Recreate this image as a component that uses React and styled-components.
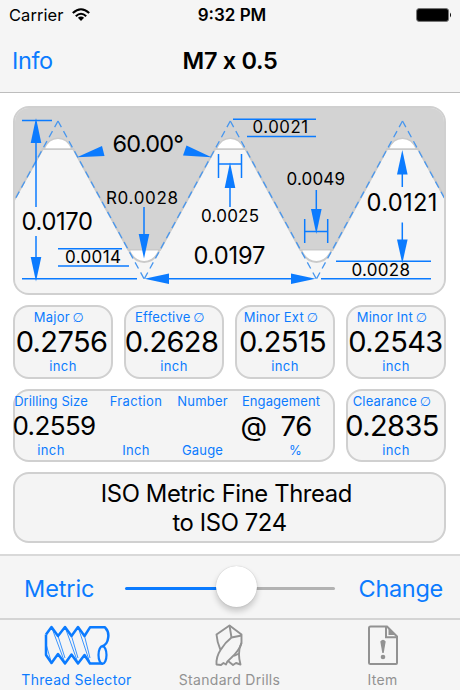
import React, { useState } from "react";
import styled, { createGlobalStyle } from "styled-components";

const blue = "#0b7bff";

const GlobalStyle = createGlobalStyle`
  * { box-sizing: border-box; }
  body {
    margin: 0;
    background: #fff;
    font-family: Inter, "Liberation Sans", sans-serif;
    overflow: hidden;
  }
`;

const Screen = styled.div`
  width: 460px;
  height: 690px;
  display: flex;
  flex-direction: column;
  color: #000;
`;

const Header = styled.header`
  height: 93px;
  flex: none;
  background: #f5f5f5;
  border-bottom: 1px solid #bdbdbd;
`;

const StatusBar = styled.div`
  height: 30px;
  display: grid;
  grid-template-columns: 1fr auto 1fr;
  align-items: center;
  padding: 0 8px 0 9px;
`;

const Carrier = styled.div`
  display: flex;
  align-items: center;
  gap: 9px;
  font-size: 16.5px;
  letter-spacing: 0.05px;
`;

const Clock = styled.div`
  margin-left: 3px;
  font-size: 17px;
  font-weight: 600;
`;

const Battery = styled.svg`
  justify-self: end;
`;

const NavBar = styled.div`
  height: 61px;
  display: grid;
  grid-template-columns: 1fr auto 1fr;
  align-items: center;
  padding: 0 12px;
`;

const LinkButton = styled.button`
  border: 0;
  padding: 0;
  background: none;
  color: ${blue};
  font: 400 23.5px Inter, sans-serif;
  letter-spacing: ${props => props.$spacing || "0"};
  text-align: left;
  white-space: nowrap;
`;

const Title = styled.h1`
  margin: 0;
  font-size: 23.5px;
  font-weight: 600;
  letter-spacing: -0.3px;
`;

const Content = styled.main`
  flex: 1;
  padding: 13px 14px 0 13px;
  display: flex;
  flex-direction: column;
  gap: 10px;
`;

const Card = styled.section`
  background: #f4f4f4;
  border: 2px solid #d0d0d0;
  border-radius: 16px;
`;

const DiagramCard = styled(Card)`
  height: 189px;
  overflow: hidden;
  svg { display: block; }
`;

const CardGrid = styled.div`
  display: grid;
  grid-template-columns: repeat(4, 100px);
  gap: 10px 11px;
`;

const StatCard = styled(Card)`
  height: 73.5px;
  display: flex;
  flex-direction: column;
  align-items: center;
`;

const DrillCard = styled(Card)`
  grid-column: span 3;
  height: 73.5px;
  display: grid;
  grid-template-columns: 72px 98px 35px 122px;
`;

const DrillColumn = styled.div`
  display: flex;
  flex-direction: column;
  align-items: center;
  white-space: nowrap;
`;

const Label = styled.div`
  height: 20px;
  line-height: 20px;
  margin-left: ${props => props.$shift || 0}px;
  color: ${blue};
  font-size: 13px;
  letter-spacing: ${props => props.$spacing || "0.35px"};
  white-space: nowrap;
`;

const Unit = styled(Label)`
  height: 18px;
  line-height: 18px;
`;

const Diameter = styled.span`
  margin-left: -1px;
  font-family: "DejaVu Sans", sans-serif;
  font-size: 13px;
  line-height: 1;
`;

const Value = styled.div`
  height: 30px;
  line-height: 30px;
  margin-left: ${props => props.$shift || 0}px;
  font-size: ${props => props.$size || "29px"};
  letter-spacing: -0.6px;
  white-space: pre;
`;

const StandardCard = styled(Card)`
  height: 71px;
  display: flex;
  align-items: center;
  justify-content: center;
  text-align: center;
  font-size: 23.8px;
  line-height: 29px;
  letter-spacing: -0.38px;
`;

const Toolbar = styled.div`
  height: 64px;
  flex: none;
  display: flex;
  align-items: center;
  justify-content: space-between;
  padding: 2px 17px 0 24px;
  background: #f5f5f5;
  border-top: 2px solid #d9d9d9;
`;

const Track = styled.div`
  width: 210px;
  height: 3px;
  margin-left: 8px;
  border-radius: 2px;
  background: linear-gradient(to right, ${blue} 53%, #b2b2b2 53%);
  display: flex;
  align-items: center;
`;

const Knob = styled.div`
  width: 41px;
  height: 41px;
  flex: none;
  margin: -3px 0 0 91px;
  border-radius: 50%;
  background: #fff;
  box-shadow: 0 4px 6px rgba(0, 0, 0, 0.2), 0 0 1px rgba(0, 0, 0, 0.25);
`;

const TabBar = styled.nav`
  height: 72px;
  flex: none;
  display: grid;
  grid-template-columns: repeat(3, 153px);
  background: #f5f5f5;
  border-top: 2px solid #d4d4d4;
`;

const Tab = styled.button`
  border: 0;
  padding: 4px 0 0;
  background: none;
  display: flex;
  flex-direction: column;
  align-items: center;
  color: ${props => (props.$active ? blue : "#929292")};
  font: 400 14px/18px Inter, sans-serif;
  letter-spacing: 0.3px;
  white-space: nowrap;
  svg { margin-bottom: 5px; flex: none; }
`;

const peaks = [58, 230.3, 402.5];
const roots = [144.2, 316.4];

const stats = [
  { label: "Major", value: "0.2756", shift: -3 },
  { label: "Effective", value: "0.2628", shift: -5 },
  { label: "Minor Ext", value: "0.2515", shift: -5 },
  { label: "Minor Int", value: "0.2543", shift: -1 }
];

// x, baseline, width, font size
const dimensions = [
  ["60.00°", 112.5, 152.3, 71.5, 23.5],
  ["0.0170", 21.5, 229.7, 71.5, 23.7],
  ["0.0197", 193.5, 264.2, 72, 23.7],
  ["0.0121", 366.5, 211, 71, 23.7],
  ["R0.0028", 106, 203.8, 72, 17],
  ["0.0014", 65, 262.7, 56, 17],
  ["0.0025", 201, 222.4, 58, 17],
  ["0.0021", 252.5, 133.4, 55.5, 16.8],
  ["0.0049", 286.5, 185, 58.5, 17],
  ["0.0028", 351.5, 275.7, 58.5, 17]
];

const ThreadDiagram = () => (
  <svg width="429" height="185" viewBox="15 108 429 185">
    <path d="M15 108H444V293H15Z" fill="#d3d3d3" />
    <path
      d="M13 202 42.7 149H73.3L128.5 250H160L215 149H245.5L300.5 250H332.5L387 149H418L446 200V295H13Z"
      fill="#f5f5f5"
      stroke="#cacaca"
      strokeWidth="2"
    />
    {peaks.map(x => (
      <path
        key={x}
        d={`M${x - 14} 149C${x - 8} 134.500 ${x + 8} 134.500 ${x + 14} 149Z`}
        fill="#fff"
        stroke="#cacaca"
        strokeWidth="1.5"
      />
    ))}
    {roots.map(x => (
      <g key={x}>
        <path d={`M${x - 14} 250.500C${x - 8} 265 ${x + 8} 265 ${x + 14} 250.500Z`} fill="#fff" />
        <path
          d={`M${x - 15} 251C${x - 8} 265.500 ${x + 8} 265.500 ${x + 15} 251`}
          fill="none"
          stroke="#cacaca"
          strokeWidth="2"
        />
      </g>
    ))}
    <g fill="none" stroke="#4796ee" strokeWidth="1.3" strokeDasharray="7 4.500">
      <path d="M58 121 13 203" />
      <path d="M58 121 144.200 279" />
      <path d="M230.300 121 144.200 279" />
      <path d="M230.300 121 316.400 279" />
      <path d="M402.500 121 316.400 279" />
      <path d="M402.500 121 446 201" />
    </g>
    <g fill="none" stroke={blue} strokeWidth="1.5">
      <path d="M22 120.500H52M22 278.700H137M36 122V207M36 236V277" />
      <path d="M58 248.700H122M58 266H129M144 207V236" />
      <path d="M233 119.300H316M247 136.500H316" />
      <path d="M218.500 154V178M241.500 154V178M218.500 164H241.500M230 186V207" />
      <path d="M304.700 219V243M327.700 219V243M304.700 231.500H327.700M316.300 190V211" />
      <path d="M402.300 172V187M402.300 222.500V242" />
      <path d="M336 261.300H431M321 278.700H431M165 278.700H295" />
    </g>
    <g fill={blue}>
      <path d="M36 118 41.300 143H30.700Z" />
      <path d="M36 281.500 41.300 257H30.700Z" />
      <path d="M144 258.500 149.300 234H138.700Z" />
      <path d="M77 157.300 102 146 104.500 156Z" />
      <path d="M211.500 157.300 186.500 145.500 183 155.500Z" />
      <path d="M230 162.500 235.300 188H224.700Z" />
      <path d="M316.300 234 321.600 209H311Z" />
      <path d="M402.300 150 407.600 174.500H397Z" />
      <path d="M402.300 263.500 407.600 239.500H397Z" />
      <path d="M144.500 278.700 169 273.400V284Z" />
      <path d="M315.500 278.700 291 273.400V284Z" />
    </g>
    <g fill="#000">
      {dimensions.map(([text, x, y, width, size]) => (
        <text key={text + x} x={x} y={y} fontSize={size} textLength={width}>
          {text}
        </text>
      ))}
    </g>
  </svg>
);

const WifiIcon = () => (
  <svg width="18" height="14" viewBox="0 0 18 14">
    <g fill="none" stroke="#000" strokeWidth="2.1">
      <path d="M.8 5.100Q9-2.600 17.200 5.100" />
      <path d="M3.800 8.200Q9 3.300 14.200 8.200" />
    </g>
    <path d="M5.900 9.800Q9 7.200 12.100 9.800L9 13Z" />
  </svg>
);

const ThreadIcon = () => (
  <svg width="66" height="42" viewBox="0 0 66 42">
    <g fill="none" stroke="currentColor" strokeLinejoin="round">
      <path
        d="M2 10.500 7.500 3 14 12 21 3 27.500 12 34 3 40.500 12 46 3.300H61Q65.500 8 64 14.500 63.500 20 58 22.500"
        strokeWidth="2.5"
      />
      <path d="M2 10.500V31L7.500 39 14 30 21 39.500 27.500 30.500 34 39.500 40.500 31 46 39.500H58.500" strokeWidth="2.5" />
      <ellipse cx="58.500" cy="31" rx="4" ry="8.800" strokeWidth="2.2" />
      <path
        d="M2 20 7.500 39M7.500 3 21 39M14 12 21 34M21 3 34 39M27.500 12 34 34M34 3 46 39M40.500 12 46 34"
        strokeWidth="0.8"
      />
    </g>
  </svg>
);

const DrillIcon = () => (
  <svg width="30" height="42" viewBox="0 0 30 42">
    <g fill="none" stroke="currentColor" strokeWidth="1.9" strokeLinejoin="round">
      <path d="M5.500 26Q2 18 1.500 10.500L14.500 1.500 26.500 10.500V19Q24 27 16 34 12 37 11 40.500L8.500 39 6 41 1.500 40.500Q1 33 5.500 26 10 18.500 16.500 13.500L26.500 11.500" />
      <path d="M14.500 1.500 16.500 13.500M26.500 19Q22 28 25.500 40.500L21 39 18 41 13 37M19 32 24 29.500" />
    </g>
  </svg>
);

const ItemIcon = () => (
  <svg width="32" height="42" viewBox="0 0 32 42">
    <path
      d="M3.500 2.500H20L30 12.500V39Q30 40 29 40H3.500Q2 40 2 39V4Q2 2.500 3.500 2.500Z"
      fill="none"
      stroke="currentColor"
      strokeWidth="2"
    />
    <path d="M19 2.500V13.300H30" fill="none" stroke="currentColor" strokeWidth="2" />
    <path d="M21.500 4V11H28.500Z" fill="currentColor" />
    <path d="M13.300 17.500Q16 14 18.700 17.500L16.700 29H15.300Z" fill="currentColor" />
    <circle cx="16" cy="33" r="2.300" fill="currentColor" />
  </svg>
);

const Stat = ({ label, value, shift }) => (
  <StatCard>
    <Label $shift={-8} $spacing="0.2px">
      {label} <Diameter>∅</Diameter>
    </Label>
    <Value $shift={shift}>{value}</Value>
    <Unit>inch</Unit>
  </StatCard>
);

const App = () => {
  const [tab, setTab] = useState("thread");

  return (
    <Screen>
      <GlobalStyle />
      <Header>
        <StatusBar>
          <Carrier>
            Carrier <WifiIcon />
          </Carrier>
          <Clock>9:32 PM</Clock>
          <Battery width="36" height="14" viewBox="0 0 36 14">
            <rect x="0.600" y="0.600" width="32" height="12.800" rx="2.500" fill="#000" stroke="#777" />
            <path d="M34 4.500Q36 7 34 9.500Z" />
          </Battery>
        </StatusBar>
        <NavBar>
          <LinkButton $spacing="-0.4px">Info</LinkButton>
          <Title>M7 x 0.5</Title>
        </NavBar>
      </Header>

      <Content>
        <DiagramCard>
          <ThreadDiagram />
        </DiagramCard>
        <CardGrid>
          {stats.map(stat => (
            <Stat key={stat.label} {...stat} />
          ))}
          <DrillCard>
            <DrillColumn>
              <Label $spacing="0.1px">Drilling Size</Label>
              <Value $size="26px" $shift={6}>0.2559</Value>
              <Unit>inch</Unit>
            </DrillColumn>
            <DrillColumn>
              <Label>Fraction</Label>
              <Value />
              <Unit>Inch</Unit>
            </DrillColumn>
            <DrillColumn>
              <Label $spacing="0.2px">Number</Label>
              <Value />
              <Unit $spacing="0.2px">Gauge</Unit>
            </DrillColumn>
            <DrillColumn>
              <Label $spacing="0.1px">Engagement</Label>
              <Value $size="27.5px" $shift={-10}>@  76</Value>
              <Unit $shift={29}>%</Unit>
            </DrillColumn>
          </DrillCard>
          <Stat label="Clearance" value="0.2835" shift={-8} />
        </CardGrid>
        <StandardCard>
          ISO Metric Fine Thread{"\u00a0"}
          <br />
          to ISO 724
        </StandardCard>
      </Content>

      <Toolbar>
        <LinkButton $spacing="-0.1px">Metric</LinkButton>
        <Track>
          <Knob />
        </Track>
        <LinkButton $spacing="-0.3px">Change</LinkButton>
      </Toolbar>
      <TabBar>
        <Tab $active={tab === "thread"} onClick={() => setTab("thread")}>
          <ThreadIcon />
          Thread Selector
        </Tab>
        <Tab $active={tab === "drills"} onClick={() => setTab("drills")}>
          <DrillIcon />
          Standard Drills
        </Tab>
        <Tab $active={tab === "item"} onClick={() => setTab("item")}>
          <ItemIcon />
          Item
        </Tab>
      </TabBar>
    </Screen>
  );
};

export default App;
